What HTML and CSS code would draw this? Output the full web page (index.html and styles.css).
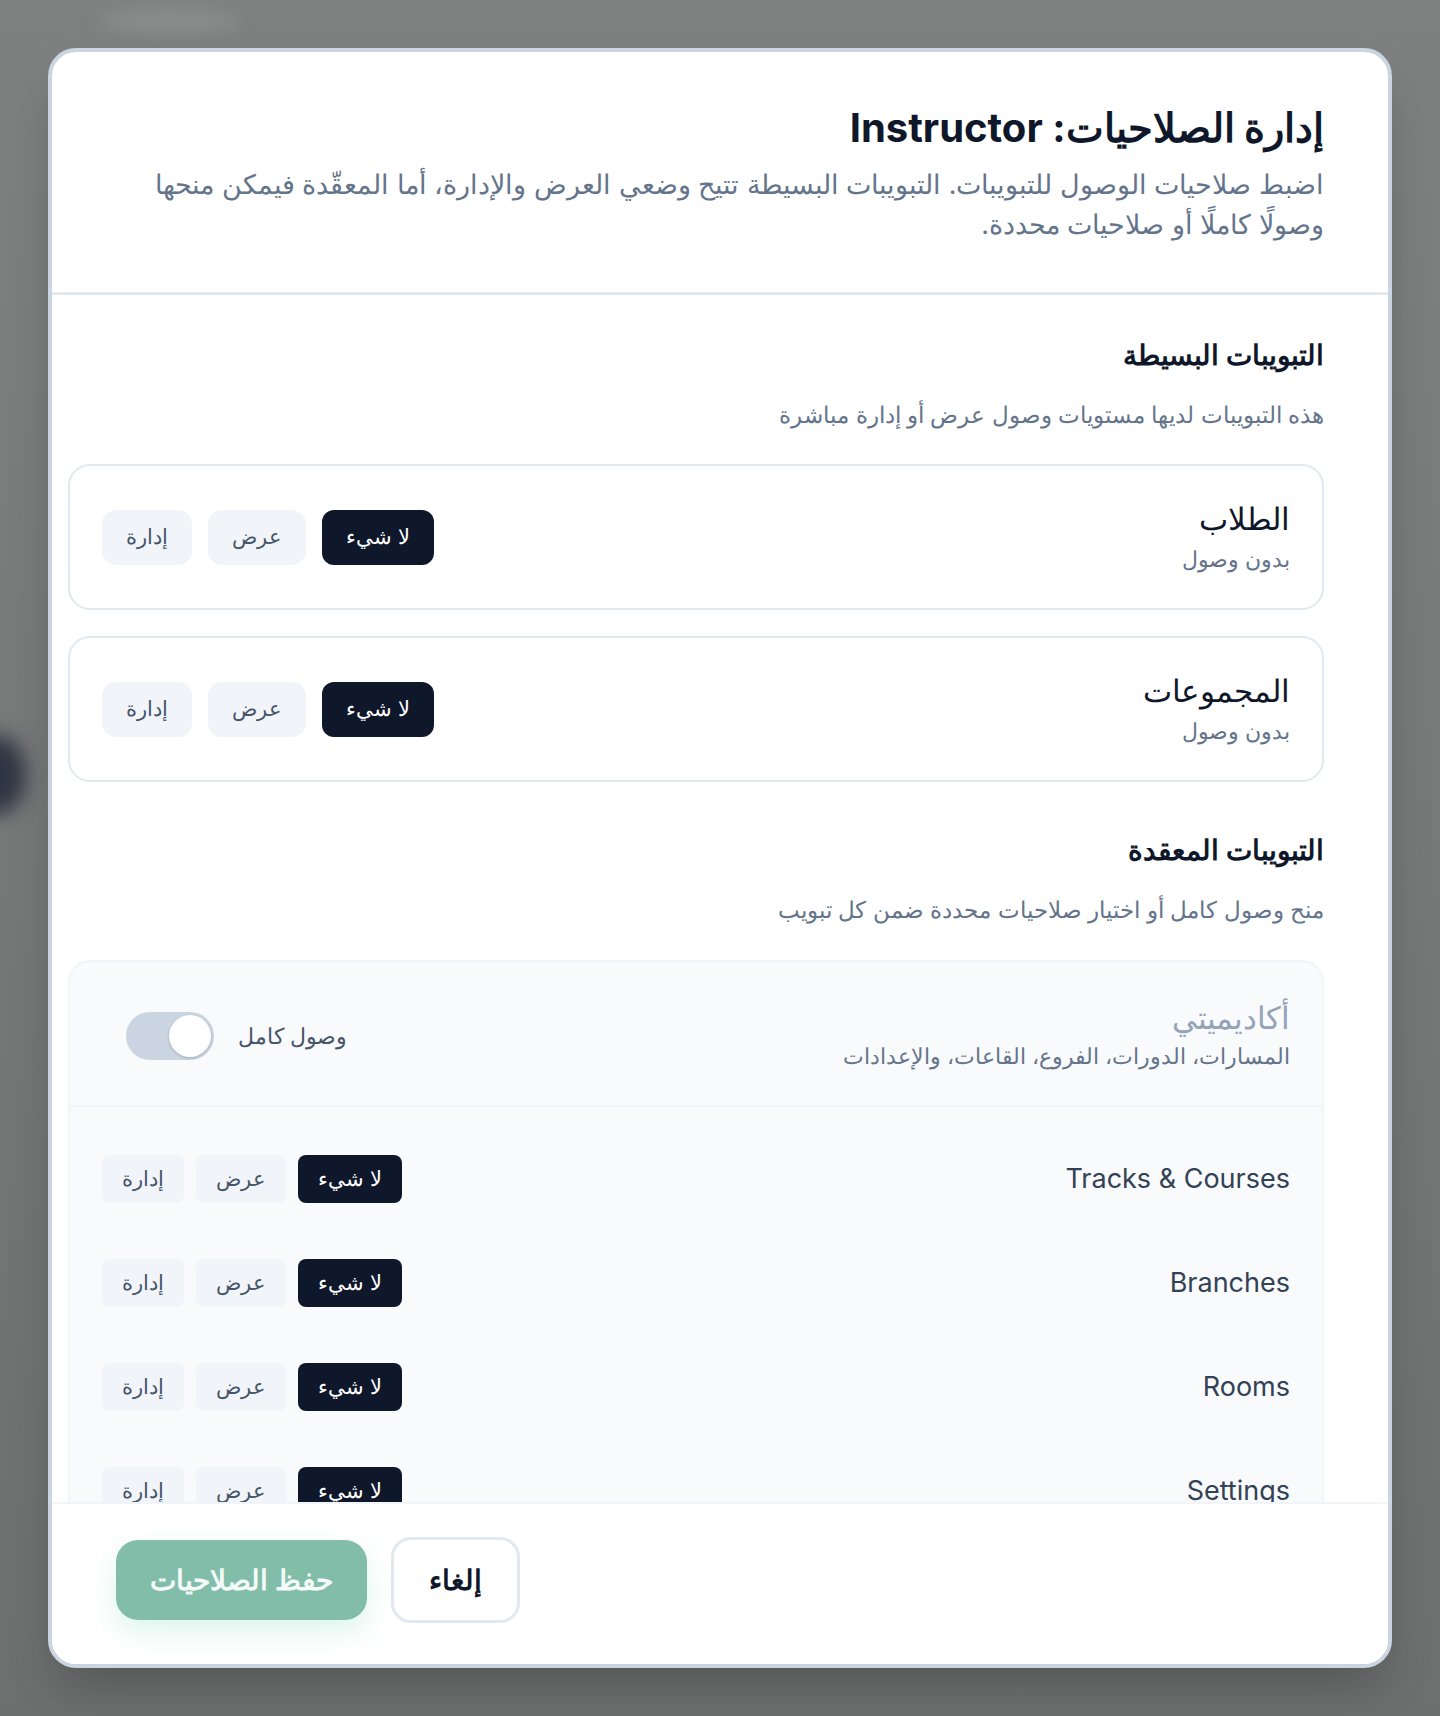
FILE: index.html
```html
<!DOCTYPE html>
<html lang="ar" dir="rtl">
<head>
<meta charset="utf-8">
<title>إدارة الصلاحيات</title>
<link rel="stylesheet" href="styles.css">
</head>
<body>
<div class="bg-blob bg-blob-dark"></div>
<div class="bg-blob bg-blob-light"></div>
<div class="modal">
  <header class="modal-head">
    <h1 class="modal-title">إدارة الصلاحيات: Instructor</h1>
    <p class="modal-desc">اضبط صلاحيات الوصول للتبويبات. التبويبات البسيطة تتيح وضعي العرض والإدارة، أما المعقّدة فيمكن منحها وصولًا كاملًا أو صلاحيات محددة.</p>
  </header>
  <div class="modal-body">
    <section class="section">
      <h2 class="section-title">التبويبات البسيطة</h2>
      <p class="section-desc">هذه التبويبات لديها مستويات وصول عرض أو إدارة مباشرة</p>
      <div class="card">
        <div class="card-text">
          <div class="card-title">الطلاب</div>
          <div class="card-sub">بدون وصول</div>
        </div>
        <div class="seg">
          <button class="seg-btn active">لا شيء</button>
          <button class="seg-btn">عرض</button>
          <button class="seg-btn">إدارة</button>
        </div>
      </div>
      <div class="card">
        <div class="card-text">
          <div class="card-title">المجموعات</div>
          <div class="card-sub">بدون وصول</div>
        </div>
        <div class="seg">
          <button class="seg-btn active">لا شيء</button>
          <button class="seg-btn">عرض</button>
          <button class="seg-btn">إدارة</button>
        </div>
      </div>
    </section>
    <section class="section section-complex">
      <h2 class="section-title">التبويبات المعقدة</h2>
      <p class="section-desc section-desc-2">منح وصول كامل أو اختيار صلاحيات محددة ضمن كل تبويب</p>
      <div class="complex">
        <div class="complex-head">
          <div class="card-text">
            <div class="complex-title">أكاديميتي</div>
            <div class="complex-sub">المسارات، الدورات، الفروع، القاعات، والإعدادات</div>
          </div>
          <div class="toggle-wrap">
            <span class="toggle-label">وصول كامل</span>
            <span class="toggle"><span class="knob"></span></span>
          </div>
        </div>
        <div class="rows">
          <div class="row">
            <span class="row-label">Tracks &amp; Courses</span>
            <div class="seg seg-sm">
              <button class="seg-btn active">لا شيء</button>
              <button class="seg-btn">عرض</button>
              <button class="seg-btn">إدارة</button>
            </div>
          </div>
          <div class="row">
            <span class="row-label">Branches</span>
            <div class="seg seg-sm">
              <button class="seg-btn active">لا شيء</button>
              <button class="seg-btn">عرض</button>
              <button class="seg-btn">إدارة</button>
            </div>
          </div>
          <div class="row">
            <span class="row-label">Rooms</span>
            <div class="seg seg-sm">
              <button class="seg-btn active">لا شيء</button>
              <button class="seg-btn">عرض</button>
              <button class="seg-btn">إدارة</button>
            </div>
          </div>
          <div class="row">
            <span class="row-label">Settings</span>
            <div class="seg seg-sm">
              <button class="seg-btn active">لا شيء</button>
              <button class="seg-btn">عرض</button>
              <button class="seg-btn">إدارة</button>
            </div>
          </div>
        </div>
      </div>
    </section>
  </div>
  <footer class="modal-foot">
    <button class="btn-cancel">إلغاء</button>
    <button class="btn-save">حفظ الصلاحيات</button>
  </footer>
</div>
</body>
</html>
```
FILE: styles.css
```css
* { box-sizing: border-box; }
html, body { margin: 0; height: 100%; }
body {
  padding: 48px;
  background: linear-gradient(180deg, #7f8080 0%, #777878 50%, #6d6e6e 100%);
  font-family: Inter, "Noto Sans", sans-serif;
  position: relative;
  overflow: hidden;
}
.bg-blob { position: absolute; border-radius: 50%; }
.bg-blob-dark {
  left: -34px; top: 735px; width: 60px; height: 80px;
  background: #2e3542; filter: blur(10px);
}
.bg-blob-light {
  left: 100px; top: 8px; width: 140px; height: 26px;
  background: #8a8b8b; filter: blur(8px);
}
.modal {
  position: relative;
  height: calc(100vh - 96px);
  background: #fff;
  border: 4px solid #cbd5e1;
  border-radius: 28px;
  display: flex;
  flex-direction: column;
  overflow: hidden;
  box-shadow: 0 25px 50px -12px rgba(0,0,0,0.25);
}
.modal-head {
  padding: 52px 64px 48px;
  border-bottom: 3px solid #e2e8f0;
}
.modal-title {
  margin: 0 0 12px;
  font-size: 40px;
  line-height: 48px;
  font-weight: 700;
  color: #0f172a;
}
.modal-desc {
  margin: 0;
  font-size: 26.8px;
  line-height: 40px;
  color: #64748b;
}
.modal-body {
  flex: 1;
  min-height: 0;
  overflow-y: auto;
  scrollbar-width: none;
  padding: 40px 64px 40px 16px;
}
.modal-body::-webkit-scrollbar { display: none; }
.section-title {
  margin: 0;
  font-size: 28px;
  line-height: 40px;
  font-weight: 600;
  color: #0f172a;
}
.section-desc {
  margin: 26px 0 35px;
  font-size: 22.6px;
  line-height: 28px;
  color: #64748b;
}
.section-desc-2 { margin: 26px 0 36px; font-size: 23px; }
.section-complex { margin-top: 48px; }
.card {
  display: flex;
  align-items: center;
  justify-content: space-between;
  border: 2px solid #e2e8f0;
  border-radius: 22px;
  padding: 35px 32px 34px;
  background: #fff;
}
.card + .card { margin-top: 26px; }
.card-title {
  font-size: 31px;
  line-height: 36px;
  font-weight: 500;
  color: #0f172a;
}
.card-sub {
  margin-top: 7px;
  font-size: 22px;
  line-height: 30px;
  color: #64748b;
}
.seg { display: flex; gap: 16px; }
.seg-btn {
  font-family: inherit;
  font-size: 21px;
  line-height: 28px;
  padding: 13px 24px 14px;
  border: none;
  border-radius: 14px;
  background: #f1f5f9;
  color: #475569;
}
.seg-btn.active {
  background: #0f172a;
  color: #fff;
  font-weight: 500;
  border-radius: 12px;
}
.seg-sm { gap: 12px; }
.seg-sm .seg-btn {
  padding: 10px 20px;
  border-radius: 8px;
}
.seg-sm .seg-btn.active { border-radius: 8px; }
.complex {
  background: #f8fafc;
  border: 2px solid #f1f5f9;
  border-radius: 22px;
}
.complex-head {
  display: flex;
  align-items: center;
  justify-content: space-between;
  padding: 38px 32px 34px;
  border-bottom: 2px solid #f1f5f9;
}
.complex-title {
  font-size: 31px;
  line-height: 36px;
  font-weight: 500;
  color: #94a3b8;
}
.complex-sub {
  margin-top: 5px;
  font-size: 21.6px;
  line-height: 30px;
  color: #64748b;
}
.toggle-wrap {
  display: flex;
  align-items: center;
  gap: 24px;
  margin-left: 24px;
}
.toggle-label {
  font-size: 22px;
  line-height: 28px;
  color: #475569;
}
.toggle {
  width: 88px;
  height: 48px;
  border-radius: 24px;
  background: #cbd5e1;
  display: flex;
  align-items: center;
  padding: 0 3px;
}
.knob {
  width: 42px;
  height: 42px;
  border-radius: 50%;
  background: #fff;
  box-shadow: 0 1px 3px rgba(15,23,42,0.2);
}
.rows {
  padding: 24px 32px;
  display: flex;
  flex-direction: column;
  gap: 8px;
}
.row {
  display: flex;
  align-items: center;
  justify-content: space-between;
  padding: 24px 0;
}
.row-label {
  font-size: 27px;
  line-height: 32px;
  color: #334155;
}
.modal-foot {
  display: flex;
  justify-content: flex-end;
  align-items: center;
  gap: 24px;
  padding: 33px 64px 41px;
  border-top: 2px solid #f1f5f9;
  background: #fff;
}
.btn-cancel {
  font-family: inherit;
  height: 86px;
  padding: 0 35px;
  border: 3px solid #e2e8f0;
  border-radius: 20px;
  background: #fff;
  color: #0f172a;
  font-size: 28px;
  font-weight: 700;
}
.btn-save {
  font-family: inherit;
  height: 80px;
  padding: 0 34px;
  border: none;
  border-radius: 22px;
  background: #82bdaa;
  color: #f4faf8;
  font-size: 28px;
  font-weight: 600;
  box-shadow: 0 12px 28px rgba(16,185,129,0.14);
}
```
